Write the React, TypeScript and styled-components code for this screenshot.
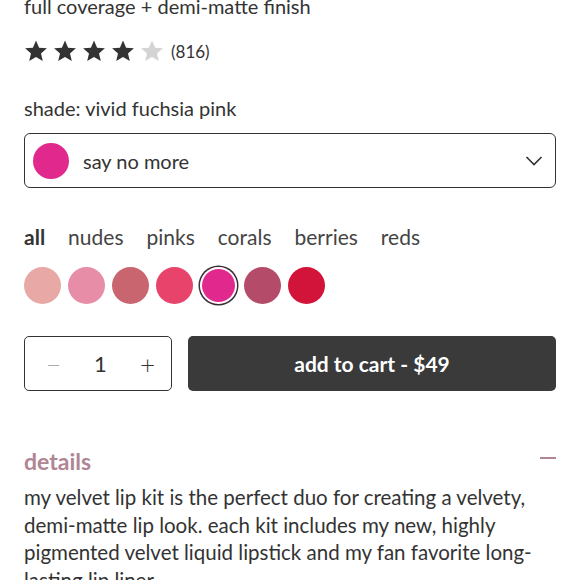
import React, { useState } from "react";
import styled, { createGlobalStyle } from "styled-components";

const GlobalStyle = createGlobalStyle`
  html, body {
    margin: 0;
    padding: 0;
    background: #fff;
    font-family: Lato, "Noto Sans", sans-serif;
    color: #333;
  }
`;

const Page = styled.div`
  width: 580px;
  height: 580px;
  overflow: hidden;
  padding: 0 24px;
  box-sizing: border-box;
`;

const Subtitle = styled.div`
  font-size: 20px;
  line-height: 24px;
  margin-top: -6px;
`;

const RatingRow = styled.div`
  display: flex;
  align-items: center;
  gap: 5px;
  margin-top: 16px;
  height: 34px;
`;

const Count = styled.span`
  font-size: 17px;
  margin-left: 2px;
`;

const ShadeLabel = styled.div`
  font-size: 20px;
  line-height: 24px;
  margin-top: 28px;
`;

const Select = styled.div`
  margin-top: 13px;
  height: 55px;
  box-sizing: border-box;
  border: 1.5px solid #333;
  border-radius: 6px;
  display: flex;
  align-items: center;
  padding: 0 12px 0 8px;
`;

const Dot = styled.span<{ $color: string }>`
  width: 36px;
  height: 36px;
  border-radius: 50%;
  background: ${(p) => p.$color};
  flex: none;
`;

const SelectText = styled.span`
  font-size: 20px;
  margin-left: 14px;
  flex: 1;
`;

const Tabs = styled.div`
  display: flex;
  gap: 23px;
  margin-top: 35px;
  font-size: 21px;
  line-height: 28px;
`;

const Tab = styled.span<{ $active?: boolean }>`
  font-weight: ${(p) => (p.$active ? 700 : 400)};
  color: ${(p) => (p.$active ? "#333" : "#444")};
`;

const Swatches = styled.div`
  display: flex;
  gap: 7px;
  margin-top: 16px;
`;

const Swatch = styled.span<{ $color: string; $active?: boolean }>`
  width: 37px;
  height: 37px;
  border-radius: 50%;
  box-sizing: border-box;
  background: ${(p) => p.$color};
  box-shadow: ${(p) => (p.$active ? "inset 0 0 0 2px #fff, 0 0 0 1.5px #333" : "none")};
`;

const CartRow = styled.div`
  display: flex;
  gap: 16px;
  margin-top: 32px;
  height: 55px;
`;

const Qty = styled.div`
  width: 148px;
  box-sizing: border-box;
  border: 1.5px solid #333;
  border-radius: 5px;
  display: flex;
  align-items: center;
  justify-content: space-between;
  padding: 0 16px 0 21px;
  font-size: 22px;
`;

const QtyBtn = styled.span<{ $muted?: boolean }>`
  color: ${(p) => (p.$muted ? "#aaa" : "#333")};
  font-weight: 300;
  font-size: 26px;
`;

const AddButton = styled.button`
  flex: 1;
  border: none;
  border-radius: 5px;
  background: #3a3a3a;
  color: #fff;
  font-family: inherit;
  font-size: 21px;
  font-weight: 700;
`;

const DetailsHead = styled.div`
  display: flex;
  justify-content: space-between;
  align-items: center;
  margin-top: 56px;
  color: #b08594;
  font-size: 23px;
  font-weight: 700;
`;

const Dash = styled.span`
  width: 16px;
  height: 2px;
  background: #b08594;
  margin-top: -6px;
`;

const Body = styled.p`
  margin: 9px 0 0;
  font-size: 20.5px;
  line-height: 27.5px;
  color: #333;
`;

const Star = ({ filled }: { filled: boolean }) => (
  <svg width="24" height="24" viewBox="0 0 24 24">
    <path
      d="M12 1.5l3.1 7.2 7.8.6-5.9 5.1 1.8 7.6L12 17.9 5.2 22l1.8-7.6-5.9-5.1 7.8-.6z"
      fill={filled ? "#333" : "#d4d4d4"}
    />
  </svg>
);

const Chevron = () => (
  <svg width="18" height="12" viewBox="0 0 18 12" fill="none">
    <path d="M1.5 2l7.5 7.5L16.5 2" stroke="#333" strokeWidth="1.6" />
  </svg>
);

const tabs = ["all", "nudes", "pinks", "corals", "berries", "reds"];
const shades = ["#e8a8a6", "#e78da8", "#c8656f", "#e8436b", "#e0288d", "#b44b69", "#d3143a"];

export default function App() {
  const [qty] = useState(1);
  return (
    <Page>
      <GlobalStyle />
      <Subtitle>full coverage + demi-matte finish</Subtitle>
      <RatingRow>
        {[0, 1, 2, 3, 4].map((i) => (
          <Star key={i} filled={i < 4} />
        ))}
        <Count>(816)</Count>
      </RatingRow>
      <ShadeLabel>shade: vivid fuchsia pink</ShadeLabel>
      <Select>
        <Dot $color="#e0288d" />
        <SelectText>say no more</SelectText>
        <Chevron />
      </Select>
      <Tabs>
        {tabs.map((t, i) => (
          <Tab key={t} $active={i === 0}>
            {t}
          </Tab>
        ))}
      </Tabs>
      <Swatches>
        {shades.map((c, i) => (
          <Swatch key={c} $color={c} $active={i === 4} />
        ))}
      </Swatches>
      <CartRow>
        <Qty>
          <QtyBtn $muted>−</QtyBtn>
          <span>{qty}</span>
          <QtyBtn>+</QtyBtn>
        </Qty>
        <AddButton>add to cart - $49</AddButton>
      </CartRow>
      <DetailsHead>
        details
        <Dash />
      </DetailsHead>
      <Body>
        my velvet lip kit is the perfect duo for creating a velvety, demi-matte lip look. each kit
        includes my new, highly pigmented velvet liquid lipstick and my fan favorite long-lasting
        lip liner.
      </Body>
    </Page>
  );
}
